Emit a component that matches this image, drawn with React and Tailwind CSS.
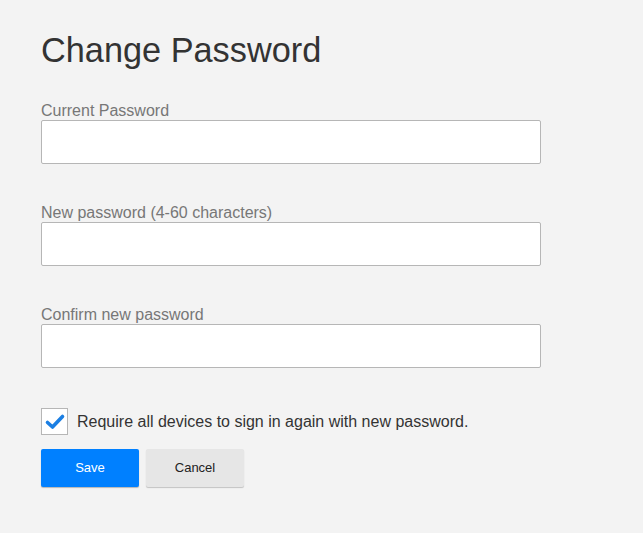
export default function App() {
  const field = (label) => (
    <div className="flex flex-col">
      <label className="pt-[1px] text-[16px] leading-[19px] text-[#777777]">{label}</label>
      <input
        type="password"
        className="mt-0 h-[44px] w-[500px] rounded-[2px] border border-[#b6b6b6] bg-white px-3 outline-none"
      />
    </div>
  );
  return (
    <div
      className="min-h-[533px] w-full bg-[#f3f3f3] pl-[41px] pt-[34px]"
      style={{ fontFamily: '"Liberation Sans", Arial, sans-serif' }}
    >
      <h1 className="text-[34.3px] leading-[32px] text-[#333333]">Change Password</h1>
      <div className="mt-[34px] flex flex-col gap-[38px]">
        {field("Current Password")}
        {field("New password (4-60 characters)")}
        {field("Confirm new password")}
      </div>
      <div className="mt-[40px] flex items-center gap-[9px]">
        <div className="flex h-[27px] w-[27px] items-center justify-center border border-[#b6b6b6] bg-white">
          <svg width="22" height="18" viewBox="0 0 22 18">
            <path d="M3.5 9.5 L8.5 14 L18.5 3.5" fill="none" stroke="#1b7fe3" strokeWidth="3.6" strokeLinecap="round" strokeLinejoin="round" />
          </svg>
        </div>
        <span className="text-[16px] leading-[20px] text-[#333333]">Require all devices to sign in again with new password.</span>
      </div>
      <div className="mt-[14px] flex gap-[7px]">
        <button className="h-[38px] w-[98px] rounded-[2px] bg-[#0080ff] text-[13px] text-white shadow-[0_1px_1px_rgba(0,0,0,0.25)]">
          Save
        </button>
        <button className="h-[38px] w-[98px] rounded-[2px] bg-[#e6e6e6] text-[13px] text-[#222222] shadow-[0_1px_1px_rgba(0,0,0,0.2)]">
          Cancel
        </button>
      </div>
    </div>
  );
}
